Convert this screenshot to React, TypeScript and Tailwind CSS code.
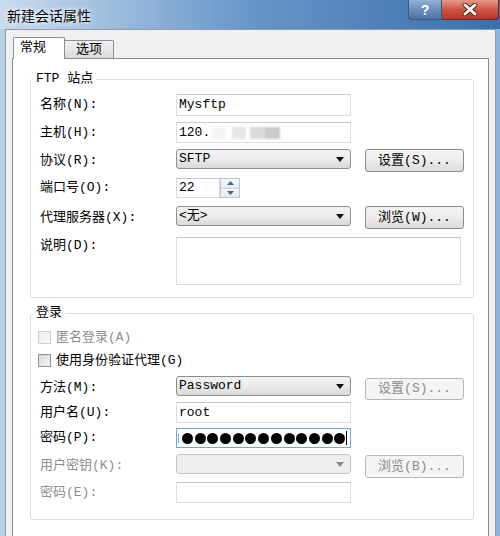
import type { ReactNode } from 'react';

const FONT = "font-['Liberation_Mono','Noto_Sans_CJK_SC',monospace] text-[13px] leading-[16px]";

function Arrow({ disabled }: { disabled?: boolean }) {
  return (
    <svg width="8" height="5" viewBox="0 0 8 5" className="ml-auto mr-[6px]">
      <path d="M0 0H8L4 5Z" fill={disabled ? '#8a8a8a' : '#111'} />
    </svg>
  );
}

function Select({ value, disabled }: { value?: string; disabled?: boolean }) {
  return (
    <div
      className={
        disabled
          ? 'flex h-[20px] w-[175px] items-center rounded-[3px] border border-[#c3c6c9] bg-[#eeeeee] pl-[2px]'
          : 'flex h-[20px] w-[175px] items-center rounded-[3px] border border-[#8e8f8f] bg-gradient-to-b from-[#f3f3f3] via-[#ebebeb] to-[#d9d9d9] pl-[2px] text-black'
      }
    >
      <span>{value}</span>
      <Arrow disabled={disabled} />
    </div>
  );
}

function Button({ children, disabled, className = '' }: { children: ReactNode; disabled?: boolean; className?: string }) {
  return (
    <div
      className={
        (disabled
          ? 'border-[#b5b9bc] bg-[#f4f4f4] text-[#8b8b8b] '
          : 'border-[#8b8b8b] bg-gradient-to-b from-[#f4f4f4] via-[#ececec] to-[#dcdcdc] text-black ') +
        'ml-[14px] flex w-[99px] items-center justify-center rounded-[3px] border ' +
        className
      }
    >
      {children}
    </div>
  );
}

function Input({ children, className = '' }: { children?: ReactNode; className?: string }) {
  return (
    <div className={'flex items-center border border-[#d9dde2] border-t-[#c4c9cf] bg-white pl-[2px] text-black ' + className}>
      {children}
    </div>
  );
}

function Row({ label, disabled, children, className = '' }: { label: string; disabled?: boolean; children: ReactNode; className?: string }) {
  return (
    <div className={'flex items-start ' + className}>
      <div className={'flex w-[136px] items-center self-stretch ' + (disabled ? 'text-[#8d8d8d]' : 'text-black')}>{label}</div>
      {children}
    </div>
  );
}

function Check({ label, disabled, className = '' }: { label: string; disabled?: boolean; className?: string }) {
  return (
    <div className={'ml-[-2px] flex h-[15px] items-center ' + className}>
      <div
        className={
          disabled
            ? 'h-[13px] w-[13px] border border-[#cfcfcf] bg-gradient-to-br from-[#ececec] to-[#f9f9f9]'
            : 'h-[13px] w-[13px] border border-[#8f8f8f] bg-gradient-to-br from-[#d8d8d8] to-[#f6f6f6]'
        }
      />
      <span className={'ml-[5px] ' + (disabled ? 'text-[#8d8d8d]' : 'text-black')}>{label}</span>
    </div>
  );
}

function Spinner() {
  return (
    <div className="flex h-[20px] w-[20px] flex-col border border-[#b9c4d0]">
      <div className="flex flex-1 items-center justify-center border-b border-[#c9d2dc] bg-gradient-to-b from-[#f6f9fc] to-[#e3ebf3]">
        <svg width="7" height="4" viewBox="0 0 7 4"><path d="M0 4H7L3.5 0Z" fill="#3f6796" /></svg>
      </div>
      <div className="flex flex-1 items-center justify-center bg-gradient-to-b from-[#f6f9fc] to-[#e3ebf3]">
        <svg width="7" height="4" viewBox="0 0 7 4"><path d="M0 0H7L3.5 4Z" fill="#3f6796" /></svg>
      </div>
    </div>
  );
}

export default function App() {
  return (
    <div className={'flex h-[536px] w-[500px] flex-col overflow-hidden bg-gradient-to-r from-[#b9cfe6] via-[#7fa6d1] to-[#8fb3da] ' + FONT}>
      {/* title bar */}
      <div className="flex h-[29px] shrink-0 items-start bg-gradient-to-r from-[#cadcee] via-[#6796c8] to-[#3a70ab]">
        <div className="flex h-[29px] items-center pl-[7px] font-['Noto_Sans_CJK_SC',sans-serif] text-[14px] text-black [text-shadow:0_0_6px_#ffffff,0_0_3px_#ffffff]">
          新建会话属性
        </div>
        <div className="ml-auto mr-[1px] flex">
          <div className="flex h-[20px] w-[34px] items-center justify-center rounded-bl-[4px] border border-t-0 border-[#3c5a82] bg-gradient-to-b from-[#94b2d4] via-[#6a8fba] to-[#4d74a3] font-['Liberation_Sans',sans-serif] text-[14px] font-bold text-white">
            ?
          </div>
          <div className="flex h-[20px] w-[57px] items-center justify-center rounded-br-[4px] border border-l-0 border-t-0 border-[#6e2a22] bg-gradient-to-b from-[#e59a8c] via-[#cf5443] to-[#b8352a]">
            <svg width="16" height="13" viewBox="0 0 16 13">
              <path d="M3 2L13 11M13 2L3 11" stroke="#4a1a14" strokeWidth="4.6" strokeLinecap="round" />
              <path d="M3 2L13 11M13 2L3 11" stroke="#ffffff" strokeWidth="3" strokeLinecap="round" />
            </svg>
          </div>
        </div>
      </div>

      {/* dialog body */}
      <div className="ml-[5px] flex w-[491px] flex-1 flex-col border border-b-0 border-[#8d9bab] bg-[#f0f0f0] pt-[7px]">
        {/* tabs */}
        <div className="ml-[7px] flex items-end">
          <div className="relative z-10 mb-[-1px] flex h-[22px] w-[52px] items-center rounded-t-[2px] border border-b-0 border-[#898c95] bg-white pb-[2px] pl-[6px] text-black">
            常规
          </div>
          <div className="flex h-[18px] w-[49px] items-center justify-center rounded-tr-[2px] border border-b-0 border-l-0 border-[#898c95] bg-gradient-to-b from-[#f2f2f2] to-[#dadada] text-black">
            选项
          </div>
        </div>

        {/* tab panel */}
        <div className="ml-[6px] flex w-[477px] flex-1 flex-col border border-b-0 border-[#898c95] bg-white pt-[12px]">
          <fieldset className="ml-[17px] w-[444px] rounded-[3px] border border-[#d5dfe5] pb-[12px] pl-[9px] pt-[7px]">
            <legend className="ml-[-7px] px-[3px] text-black">FTP 站点</legend>
            <Row label="名称(N):" className="h-[22px]">
              <Input className="h-[22px] w-[175px]">Mysftp</Input>
            </Row>
            <Row label="主机(H):" className="mt-[6px] h-[21px]">
              <Input className="h-[21px] w-[175px]">
                <span>120.</span>
                <span className="ml-[2px] h-[12px] w-[14px] bg-[#f4f4f4] blur-[1px]" />
                <span className="ml-[6px] h-[12px] w-[14px] bg-[#e6e6e6] blur-[1px]" />
                <span className="ml-[4px] h-[12px] w-[14px] bg-[#d9d9d9] blur-[1px]" />
                <span className="h-[12px] w-[16px] bg-[#c9c9cc] blur-[1px]" />
              </Input>
            </Row>
            <Row label="协议(R):" className="mt-[6px] h-[23px]">
              <Select value="SFTP" />
              <Button className="h-[23px]">设置(S)...</Button>
            </Row>
            <Row label="端口号(O):" className="mt-[6px] h-[20px]">
              <Input className="h-[20px] w-[44px]">22</Input>
              <Spinner />
            </Row>
            <Row label="代理服务器(X):" className="mt-[8px] h-[23px]">
              <Select value="<无>" />
              <Button className="h-[23px]">浏览(W)...</Button>
            </Row>
            <div className="mt-[8px] flex h-[48px] items-start">
              <div className="w-[136px] pt-[1px] text-black">说明(D):</div>
              <div className="h-[48px] w-[285px] border border-[#d9dde2] border-t-[#c4c9cf] bg-white" />
            </div>
          </fieldset>

          <fieldset className="ml-[17px] mt-[7px] w-[444px] rounded-[3px] border border-[#d5dfe5] pb-[16px] pl-[9px] pt-[9px]">
            <legend className="ml-[-7px] px-[3px] text-black">登录</legend>
            <Check label="匿名登录(A)" disabled />
            <Check label="使用身份验证代理(G)" className="mt-[8px]" />
            <Row label="方法(M):" className="mt-[8px] h-[24px]">
              <Select value="Password" />
              <Button disabled className="mt-[2px] h-[22px]">设置(S)...</Button>
            </Row>
            <Row label="用户名(U):" className="mt-[2px] h-[21px]">
              <Input className="h-[21px] w-[175px]">root</Input>
            </Row>
            <Row label="密码(P):" className="mt-[5px] h-[20px]">
              <div className="flex h-[20px] w-[175px] items-center border border-[#6fa6d9] bg-white pl-[1px]">
                <span className="h-[9px] w-[1px] bg-[#7aa7d6]" />
                <div className="ml-[3px] flex gap-[1.7px]">
                  {Array.from({ length: 13 }).map((_, i) => (
                    <span key={i} className="h-[11px] w-[11px] rounded-full bg-black" />
                  ))}
                </div>
                <span className="ml-[1px] h-[14px] w-[1px] bg-black" />
              </div>
            </Row>
            <Row label="用户密钥(K):" disabled className="mt-[6px] h-[24px]">
              <Select disabled />
              <Button disabled className="mt-[1px] h-[23px]">浏览(B)...</Button>
            </Row>
            <Row label="密码(E):" disabled className="mt-[4px] h-[21px]">
              <Input className="h-[21px] w-[175px] border-[#c6c9cd]" />
            </Row>
          </fieldset>
        </div>
      </div>
    </div>
  );
}
